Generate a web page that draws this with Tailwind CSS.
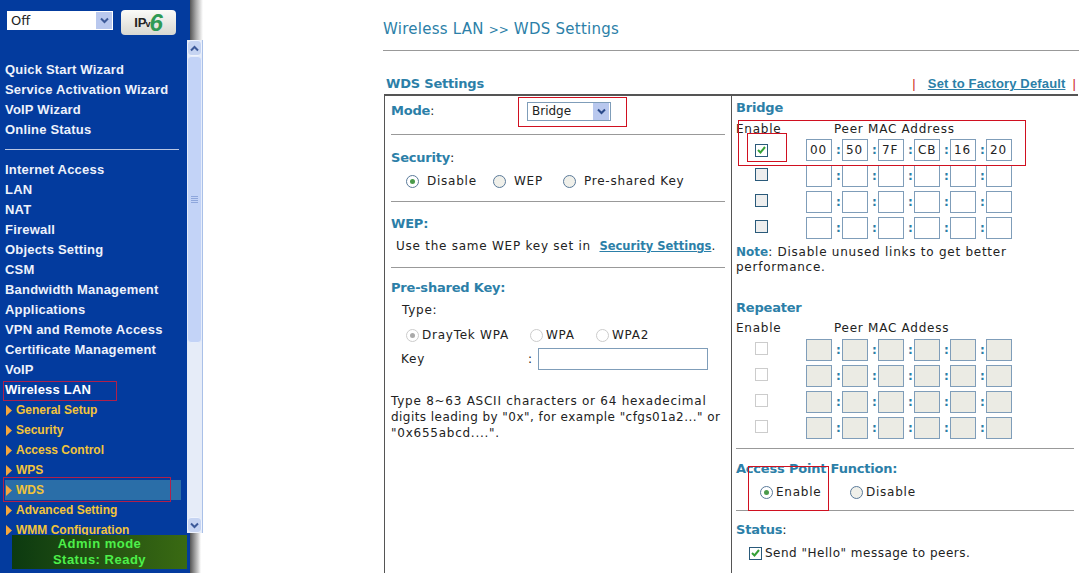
<!DOCTYPE html>
<html><head><meta charset="utf-8"><script src="https://cdn.jsdelivr.net/npm/@tailwindcss/browser@4"></script></head>
<body class="m-0 bg-white">
<div class="relative flex w-[1083px] h-[573px] overflow-hidden bg-white font-['DejaVu_Sans',sans-serif] text-[12px] tracking-[0.75px] text-[#222]">
  <aside class="flex flex-col w-[187px] h-full bg-[#033b9e] font-['Liberation_Sans',sans-serif] font-bold text-[13px] tracking-[0.2px] text-[#eef2fb]">
    <div class="flex items-start gap-2 pl-[7px] pt-[10px] h-[60px]">
      <div class="flex items-center justify-between w-[106px] h-[19px] mt-px bg-white pl-1 pr-px font-['DejaVu_Sans',sans-serif] font-normal text-[13px] tracking-normal text-[#222]">Off<span class="flex items-center justify-center w-[16px] h-[17px] bg-[#b9c8ee]"><svg width="9" height="7" viewBox="0 0 9 7"><path d="M1 1.5l3.5 3.5 3.5-3.5" fill="none" stroke="#3d5a99" stroke-width="2"/></svg></span></div>
      <div class="flex items-center justify-center w-[55px] h-[25px] rounded-sm bg-gradient-to-b from-[#fbfbf8] to-[#d8d8d2] font-['Liberation_Sans',sans-serif] text-[#222] tracking-normal"><span class="text-[13px]">IP</span><span class="text-[9px] mt-1 -ml-px">v</span><span class="text-[24px] italic text-[#2f9a55] leading-none -ml-px">6</span></div>
    </div>
    <nav class="flex flex-col">
      <a class="h-5 pl-[5px] leading-5">Quick Start Wizard</a>
      <a class="h-5 pl-[5px] leading-5">Service Activation Wizard</a>
      <a class="h-5 pl-[5px] leading-5">VoIP Wizard</a>
      <a class="h-5 pl-[5px] leading-5">Online Status</a>
    </nav>
    <div class="h-px w-[174px] ml-[5px] mt-[9px] mb-[10px] bg-[#b9c6e4]"></div>
    <nav class="flex flex-col">
      <a class="h-5 pl-[5px] leading-5">Internet Access</a>
      <a class="h-5 pl-[5px] leading-5">LAN</a>
      <a class="h-5 pl-[5px] leading-5">NAT</a>
      <a class="h-5 pl-[5px] leading-5">Firewall</a>
      <a class="h-5 pl-[5px] leading-5">Objects Setting</a>
      <a class="h-5 pl-[5px] leading-5">CSM</a>
      <a class="h-5 pl-[5px] leading-5">Bandwidth Management</a>
      <a class="h-5 pl-[5px] leading-5">Applications</a>
      <a class="h-5 pl-[5px] leading-5">VPN and Remote Access</a>
      <a class="h-5 pl-[5px] leading-5">Certificate Management</a>
      <a class="h-5 pl-[5px] leading-5">VoIP</a>
      <a class="h-5 pl-[5px] leading-5 text-white">Wireless LAN</a>
    </nav>
    <div class="flex flex-col h-[135px] overflow-hidden text-[12px] tracking-normal text-[#f2c43a]">
      <a class="flex items-center h-5 pl-[6px] gap-[4px] shrink-0"><svg width="6" height="11" viewBox="0 0 6 11"><path d="M0 0l6 5.5-6 5.5z" fill="#f5a63c"/></svg>General Setup</a>
      <a class="flex items-center h-5 pl-[6px] gap-[4px] shrink-0"><svg width="6" height="11" viewBox="0 0 6 11"><path d="M0 0l6 5.5-6 5.5z" fill="#f5a63c"/></svg>Security</a>
      <a class="flex items-center h-5 pl-[6px] gap-[4px] shrink-0"><svg width="6" height="11" viewBox="0 0 6 11"><path d="M0 0l6 5.5-6 5.5z" fill="#f5a63c"/></svg>Access Control</a>
      <a class="flex items-center h-5 pl-[6px] gap-[4px] shrink-0"><svg width="6" height="11" viewBox="0 0 6 11"><path d="M0 0l6 5.5-6 5.5z" fill="#f5a63c"/></svg>WPS</a>
      <a class="flex items-center h-5 ml-[5px] w-[176px] pl-px gap-[4px] shrink-0 bg-[#2a6ea8]"><svg width="6" height="11" viewBox="0 0 6 11"><path d="M0 0l6 5.5-6 5.5z" fill="#f5a63c"/></svg>WDS</a>
      <a class="flex items-center h-5 pl-[6px] gap-[4px] shrink-0"><svg width="6" height="11" viewBox="0 0 6 11"><path d="M0 0l6 5.5-6 5.5z" fill="#f5a63c"/></svg>Advanced Setting</a>
      <a class="flex items-center h-5 pl-[6px] gap-[4px] shrink-0"><svg width="6" height="11" viewBox="0 0 6 11"><path d="M0 0l6 5.5-6 5.5z" fill="#f5a63c"/></svg>WMM Configuration</a>
    </div>
    <div class="ml-[12px] w-[175px] h-[34px] bg-gradient-to-r from-[#0c3a10] to-[#3a6a12] text-center text-[13px] leading-[16px] tracking-[0.5px] text-[#4df04a] pt-px">Admin mode<br>Status: Ready</div>
  </aside>
  <div class="flex flex-col w-[16px] h-full">
    <div class="h-[40px] bg-[linear-gradient(90deg,#033b9e_3px,#555_3px,#aaa_9px,#fff_16px)]"></div>
    <div class="flex flex-col h-[493px] bg-[#e6ecf8] border-r border-[#a9c0e8]">
      <div class="flex items-center justify-center h-[16px] bg-[#c6d4f2] border border-[#eef3fd] rounded-sm"><svg width="9" height="7" viewBox="0 0 9 7"><path d="M1 5.5l3.5-3.5 3.5 3.5" fill="none" stroke="#3d5a99" stroke-width="2"/></svg></div>
      <div class="flex items-center justify-center h-[287px] bg-[#c3d3f7] border border-[#e6edfb] rounded-sm"><svg width="7" height="8" viewBox="0 0 7 8"><path d="M0 .5h7M0 2.5h7M0 4.5h7M0 6.5h7" stroke="#8ea6dc"/></svg></div>
      <div class="flex-1"></div>
      <div class="flex items-center justify-center h-[16px] bg-[#c6d4f2] border border-[#eef3fd] rounded-sm"><svg width="9" height="7" viewBox="0 0 9 7"><path d="M1 1.5l3.5 3.5 3.5-3.5" fill="none" stroke="#3d5a99" stroke-width="2"/></svg></div>
    </div>
    <div class="flex-1 bg-[linear-gradient(90deg,#033b9e_3px,#555_3px,#ccc_11px,#fff_14px)]"></div>
  </div>
  <main class="ml-[180px] w-[696px] shrink-0">
    <h1 class="h-[51px] pt-[19px] text-[15px] tracking-[0.25px] leading-5 font-normal text-[#2c7fa8] border-b border-[#999]">Wireless LAN <span class="text-[12px] tracking-normal">&gt;&gt;</span> WDS Settings</h1>
    <div class="flex items-center justify-between h-[43px] pt-[23px] pl-[3px] pr-[3px] font-bold text-[13px] tracking-[-0.2px] text-[#2c7fa8]">
      <span>WDS Settings</span>
      <span class="flex items-center gap-[12px] font-['Liberation_Sans',sans-serif] text-[13px] tracking-[0.15px]"><span class="font-normal text-[#c22]">|</span><a class="underline">Set to Factory Default</a><span class="font-normal text-[#c22] -ml-[5px]">|</span></span>
    </div>
    <div class="flex w-[694px] h-[500px] ml-px border-2 border-[#555] border-b-0 border-r-0 border-l-[1px]">
      <div class="w-[347px] shrink-0 border-r border-[#555] px-[6px]">
        <div class="flex items-center h-[39px] pb-[8px] border-b border-[#999]"><span class="w-[136px]"><b class="text-[#2c7fa8] text-[13px] tracking-[-0.2px]">Mode</b>:</span>
          <div class="flex items-center justify-between w-[84px] h-[19px] border border-[#7f9db9] pl-1 pr-px tracking-normal">Bridge<span class="flex items-center justify-center w-[16px] h-[17px] bg-[#b9c8ee]"><svg width="9" height="7" viewBox="0 0 9 7"><path d="M1 1.5l3.5 3.5 3.5-3.5" fill="none" stroke="#2a4a8a" stroke-width="2"/></svg></span></div>
        </div>
        <div class="h-[67px] border-b border-[#999] pt-[13px]"><b class="text-[#2c7fa8] text-[13px] tracking-[-0.2px] leading-5 block">Security<span class="font-normal text-[#222]">:</span></b>
          <div class="flex items-center h-6 pl-[15px] mt-[1px]">
            <span class="shrink-0 w-[13px] h-[13px] rounded-full border border-[#5a7a9a] bg-white flex items-center justify-center"><span class="w-[5px] h-[5px] rounded-full bg-[#4a9a4a]"></span></span><span class="ml-[8px] w-[66px]">Disable</span>
            <span class="shrink-0 w-[13px] h-[13px] rounded-full border border-[#5a7a9a] bg-[#f0f0ea]"></span><span class="ml-[8px] w-[49px]">WEP</span>
            <span class="shrink-0 w-[13px] h-[13px] rounded-full border border-[#5a7a9a] bg-[#f0f0ea]"></span><span class="ml-[8px]">Pre-shared Key</span>
          </div>
        </div>
        <div class="h-[66px] border-b border-[#999] pt-[12px]"><b class="text-[#2c7fa8] text-[13px] tracking-[-0.2px] leading-5 block">WEP:</b>
          <div class="pl-[5px] mt-[2px] leading-5 whitespace-nowrap">Use the same WEP key set in <a class="ml-[4px] font-bold text-[#2c7fa8] underline text-[11.5px] tracking-normal">Security Settings</a>.</div>
        </div>
        <div class="pt-[10px]"><b class="text-[#2c7fa8] text-[13px] tracking-[-0.2px] leading-5 block">Pre-shared Key:</b>
          <div class="pl-[11px] mt-[2px] leading-5">Type:</div>
          <div class="flex items-center h-5 pl-[15px] mt-[5px]">
            <span class="shrink-0 w-[13px] h-[13px] rounded-full border border-[#ccc] bg-white flex items-center justify-center"><span class="w-[5px] h-[5px] rounded-full bg-[#aaa]"></span></span><span class="ml-[3px] w-[108px]">DrayTek WPA</span>
            <span class="shrink-0 w-[13px] h-[13px] rounded-full border border-[#ccc]"></span><span class="ml-[3px] w-[50px]">WPA</span>
            <span class="shrink-0 w-[13px] h-[13px] rounded-full border border-[#ccc]"></span><span class="ml-[3px]">WPA2</span>
          </div>
          <div class="flex items-center h-[22px] pl-[10px] mt-[3px]"><span class="w-[127px]">Key</span><span class="w-[10px]">:</span><div class="w-[170px] h-[22px] border border-[#7f9db9]"></div></div>
          <p class="mt-[23px] leading-4 w-[334px] whitespace-nowrap">Type 8~63 ASCII characters or 64 hexadecimal<br><span class="tracking-[0.45px]">digits leading by "0x", for example "cfgs01a2..." or</span><br>"0x655abcd....".</p>
        </div>
      </div>
      <div class="w-[346px] shrink-0 pl-[4px] pr-[4px]">
        <b class="block text-[#2c7fa8] text-[13px] tracking-[-0.2px] leading-5 pt-[2px] h-[22px]">Bridge</b>
        <div class="flex h-[21px] leading-5 pt-px"><span class="w-[98px]">Enable</span><span>Peer MAC Address</span></div>
        <div class="flex flex-col gap-[4px]">
          <div class="flex items-center h-[22px]"><span class="ml-[19px] w-[13px] h-[13px] border border-[#2a5a7a] flex items-center justify-center"><svg width="11" height="10" viewBox="0 0 11 10"><path d="M2 5l2.5 2.5L9 2" fill="none" stroke="#35a035" stroke-width="2"/></svg></span>
            <div class="ml-[38px] flex gap-[10px] [&>span]:relative [&>span]:w-[26px] [&>span]:h-[22px] [&>span]:border [&>span]:border-[#7f9db9] [&>span]:pl-[3px] [&>span]:leading-5 [&>span+span]:before:content-[':'] [&>span+span]:before:absolute [&>span+span]:before:-left-[7px] [&>span+span]:before:font-bold [&>span+span]:before:text-[#2c7fa8]"><span>00</span><span>50</span><span>7F</span><span>CB</span><span>16</span><span>20</span></div></div>
          <div class="flex items-center h-[22px]"><span class="ml-[19px] mb-[4px] w-[13px] h-[13px] border border-[#2a5a7a] bg-[#eee]"></span>
            <div class="ml-[38px] flex gap-[10px] [&>span]:relative [&>span]:w-[26px] [&>span]:h-[22px] [&>span]:border [&>span]:border-[#7f9db9] [&>span]:leading-5 [&>span+span]:before:content-[':'] [&>span+span]:before:absolute [&>span+span]:before:-left-[7px] [&>span+span]:before:font-bold [&>span+span]:before:text-[#2c7fa8]"><span></span><span></span><span></span><span></span><span></span><span></span></div></div>
          <div class="flex items-center h-[22px]"><span class="ml-[19px] mb-[4px] w-[13px] h-[13px] border border-[#2a5a7a] bg-[#eee]"></span>
            <div class="ml-[38px] flex gap-[10px] [&>span]:relative [&>span]:w-[26px] [&>span]:h-[22px] [&>span]:border [&>span]:border-[#7f9db9] [&>span]:leading-5 [&>span+span]:before:content-[':'] [&>span+span]:before:absolute [&>span+span]:before:-left-[7px] [&>span+span]:before:font-bold [&>span+span]:before:text-[#2c7fa8]"><span></span><span></span><span></span><span></span><span></span><span></span></div></div>
          <div class="flex items-center h-[22px]"><span class="ml-[19px] mb-[4px] w-[13px] h-[13px] border border-[#2a5a7a] bg-[#eee]"></span>
            <div class="ml-[38px] flex gap-[10px] [&>span]:relative [&>span]:w-[26px] [&>span]:h-[22px] [&>span]:border [&>span]:border-[#7f9db9] [&>span]:leading-5 [&>span+span]:before:content-[':'] [&>span+span]:before:absolute [&>span+span]:before:-left-[7px] [&>span+span]:before:font-bold [&>span+span]:before:text-[#2c7fa8]"><span></span><span></span><span></span><span></span><span></span><span></span></div></div>
        </div>
        <p class="mt-[6px] leading-[15px] w-[300px]"><b class="text-[#2c7fa8] tracking-normal">Note</b>: Disable unused links to get better performance.</p>
        <b class="block mt-[23px] text-[#2c7fa8] text-[13px] tracking-[-0.2px] leading-5 h-[20px]">Repeater</b>
        <div class="flex h-[21px] leading-5"><span class="w-[98px]">Enable</span><span>Peer MAC Addess</span></div>
        <div class="flex flex-col gap-[4px]">
          <div class="flex items-center h-[22px]"><span class="ml-[19px] mb-[4px] w-[13px] h-[13px] border border-[#ccc]"></span>
            <div class="ml-[38px] flex gap-[10px] [&>span]:relative [&>span]:w-[26px] [&>span]:h-[22px] [&>span]:border [&>span]:border-[#7f9db9] [&>span]:bg-[#ebebe4] [&>span]:leading-5 [&>span+span]:before:content-[':'] [&>span+span]:before:absolute [&>span+span]:before:-left-[7px] [&>span+span]:before:font-bold [&>span+span]:before:text-[#2c7fa8]"><span></span><span></span><span></span><span></span><span></span><span></span></div></div>
          <div class="flex items-center h-[22px]"><span class="ml-[19px] mb-[4px] w-[13px] h-[13px] border border-[#ccc]"></span>
            <div class="ml-[38px] flex gap-[10px] [&>span]:relative [&>span]:w-[26px] [&>span]:h-[22px] [&>span]:border [&>span]:border-[#7f9db9] [&>span]:bg-[#ebebe4] [&>span]:leading-5 [&>span+span]:before:content-[':'] [&>span+span]:before:absolute [&>span+span]:before:-left-[7px] [&>span+span]:before:font-bold [&>span+span]:before:text-[#2c7fa8]"><span></span><span></span><span></span><span></span><span></span><span></span></div></div>
          <div class="flex items-center h-[22px]"><span class="ml-[19px] mb-[4px] w-[13px] h-[13px] border border-[#ccc]"></span>
            <div class="ml-[38px] flex gap-[10px] [&>span]:relative [&>span]:w-[26px] [&>span]:h-[22px] [&>span]:border [&>span]:border-[#7f9db9] [&>span]:bg-[#ebebe4] [&>span]:leading-5 [&>span+span]:before:content-[':'] [&>span+span]:before:absolute [&>span+span]:before:-left-[7px] [&>span+span]:before:font-bold [&>span+span]:before:text-[#2c7fa8]"><span></span><span></span><span></span><span></span><span></span><span></span></div></div>
          <div class="flex items-center h-[22px]"><span class="ml-[19px] mb-[4px] w-[13px] h-[13px] border border-[#ccc]"></span>
            <div class="ml-[38px] flex gap-[10px] [&>span]:relative [&>span]:w-[26px] [&>span]:h-[22px] [&>span]:border [&>span]:border-[#7f9db9] [&>span]:bg-[#ebebe4] [&>span]:leading-5 [&>span+span]:before:content-[':'] [&>span+span]:before:absolute [&>span+span]:before:-left-[7px] [&>span+span]:before:font-bold [&>span+span]:before:text-[#2c7fa8]"><span></span><span></span><span></span><span></span><span></span><span></span></div></div>
        </div>
        <div class="mt-[9px] h-[63px] border-t border-b border-[#999] pt-[10px]"><b class="block text-[#2c7fa8] text-[13px] tracking-[-0.2px] leading-5">Access Point Function:</b>
          <div class="flex items-center h-5 pl-[24px] mt-[3px]"><span class="shrink-0 w-[13px] h-[13px] rounded-full border border-[#5a7a9a] flex items-center justify-center"><span class="w-[5px] h-[5px] rounded-full bg-[#4a9a4a]"></span></span><span class="ml-[3px] w-[74px]">Enable</span><span class="shrink-0 w-[13px] h-[13px] rounded-full border border-[#5a7a9a] bg-[#f0f0ea]"></span><span class="ml-[3px]">Disable</span></div>
        </div>
        <b class="block mt-[9px] text-[#2c7fa8] text-[13px] tracking-[-0.2px] leading-5">Status<span class="font-normal text-[#222]">:</span></b>
        <div class="flex items-center h-5 pl-[13px] mt-[3px]"><span class="w-[13px] h-[13px] border border-[#2a5a7a] flex items-center justify-center"><svg width="11" height="10" viewBox="0 0 11 10"><path d="M2 5l2.5 2.5L9 2" fill="none" stroke="#35a035" stroke-width="2"/></svg></span><span class="ml-[3px] tracking-[0.5px]">Send "Hello" message to peers.</span></div>
      </div>
    </div>
  </main>
  <div class="absolute left-[3px] top-[381px] w-[114px] h-[20px] border border-[#b0204a]"></div>
  <div class="absolute left-[3px] top-[477px] w-[168px] h-[25px] border border-[#b0204a]"></div>
  <div class="absolute left-[518px] top-[97px] w-[109px] h-[30px] border border-[#d01020]"></div>
  <div class="absolute left-[738px] top-[120px] w-[288px] h-[46px] border border-[#d01020]"></div>
  <div class="absolute left-[747px] top-[133px] w-[40px] h-[29px] border border-[#d01020]"></div>
  <div class="absolute left-[748px] top-[466px] w-[81px] h-[45px] border border-[#d01020]"></div>
</div>
</body></html>
